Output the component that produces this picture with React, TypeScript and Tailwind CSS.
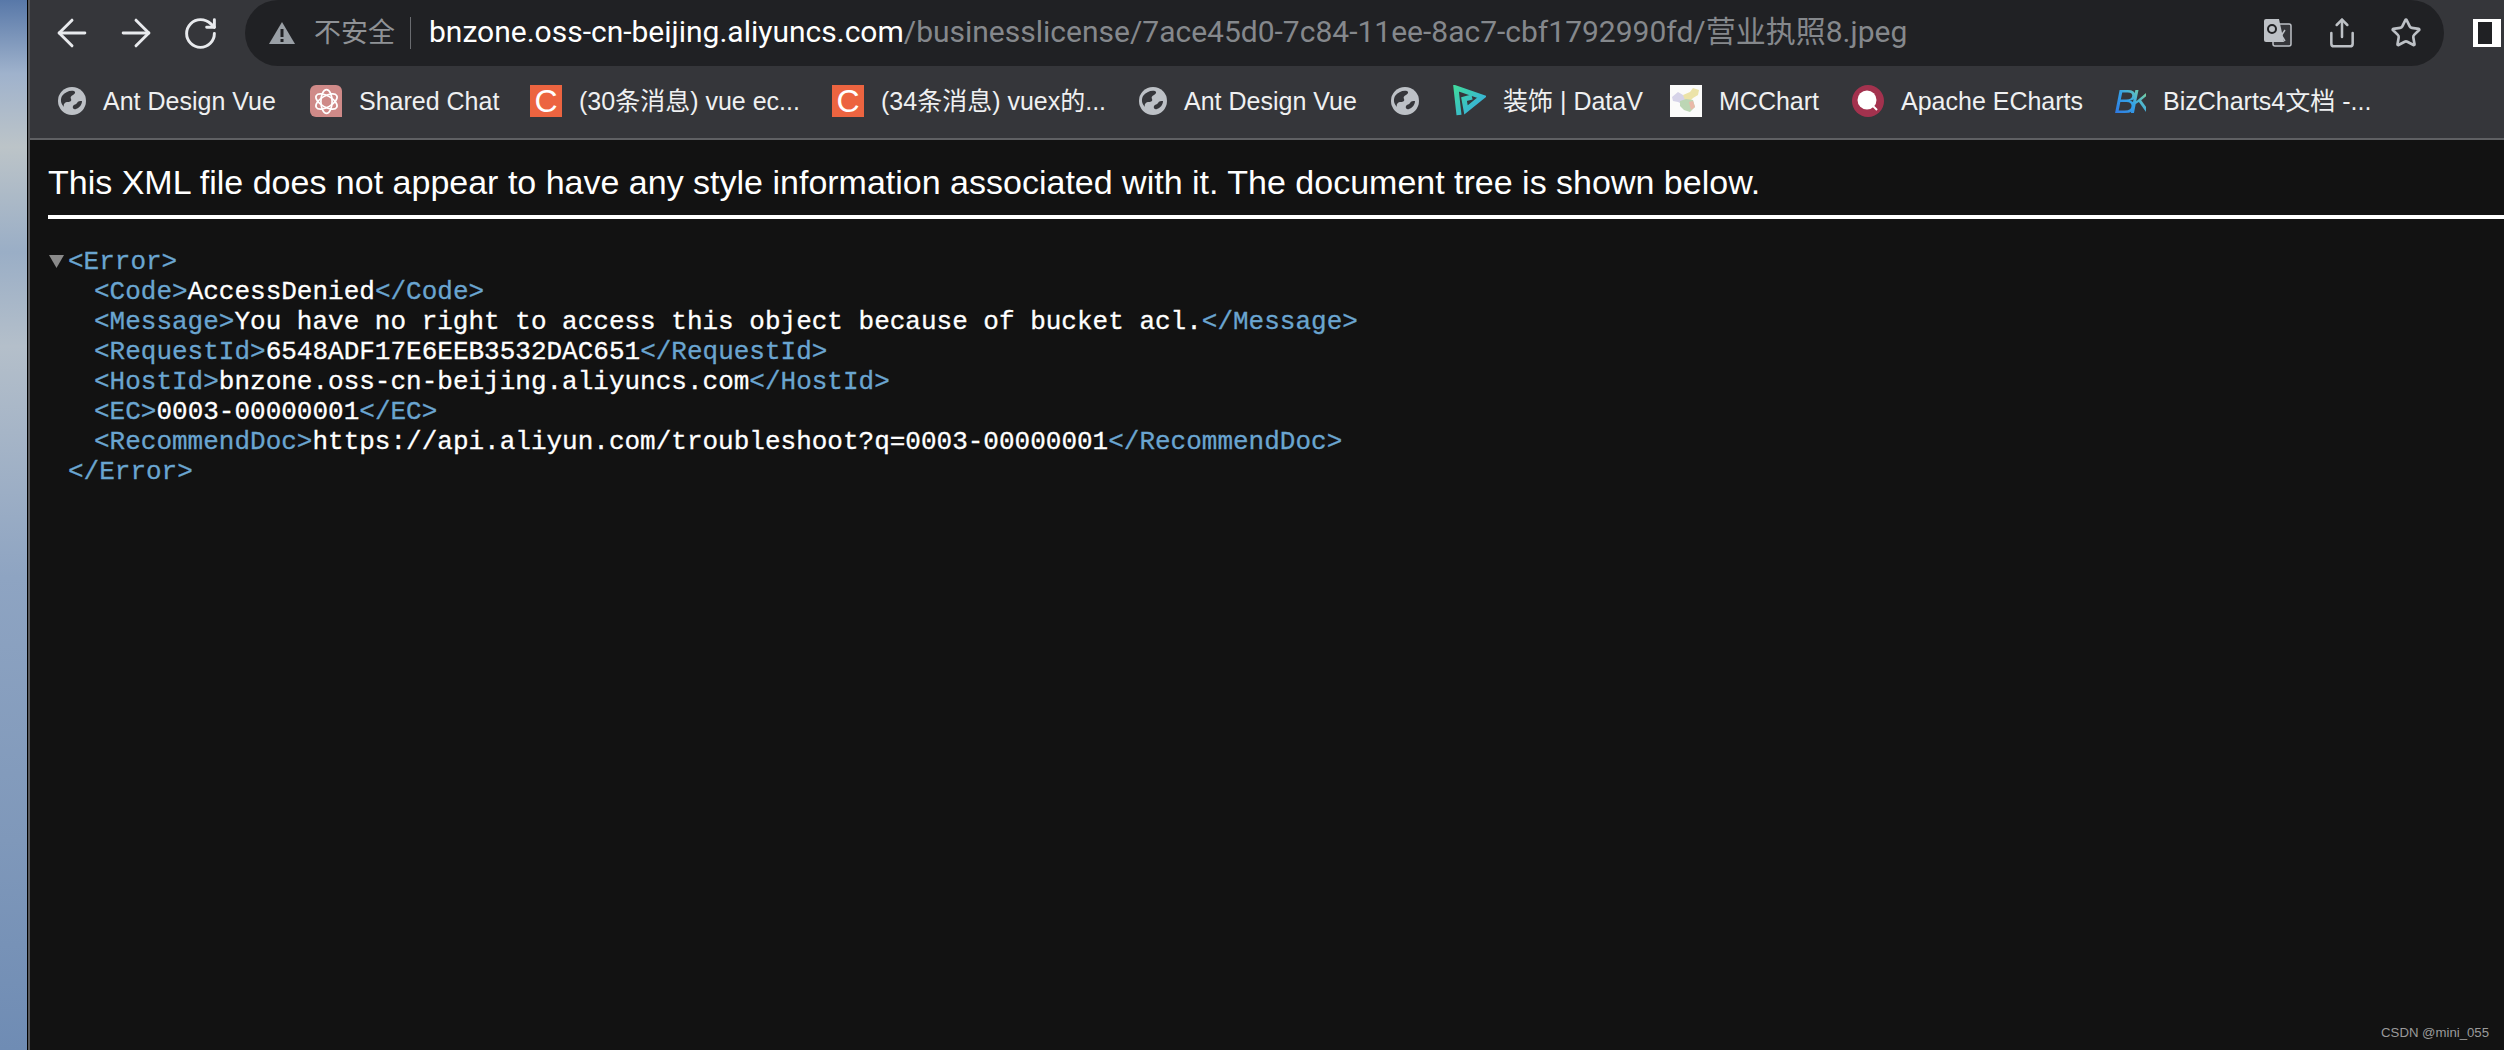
import React from "react";
import { ArrowLeft, ArrowRight, RotateCw, Star, Share } from "lucide-react";

const Globe = () => (
  <svg width="28" height="28" viewBox="0 0 28 28" className="shrink-0">
    <circle cx="14" cy="14" r="14" fill="#bdc1c6" />
    <path
      d="M4 9c3-4 8-6 12-5 2 1 1 3-1 4-2 1-3 2-2 4 1 2-1 3-3 3-3 0-5 2-4 5-3-3-4-7-2-11z"
      fill="#35363a"
    />
    <path d="M24 14c-2 0-4 0-5 2-1 2-3 1-4 3-1 2 1 4 3 3 3-1 6-4 6-8z" fill="#35363a" />
  </svg>
);

const GptIcon = () => (
  <div className="w-8 h-8 rounded-md rounded-br-none bg-[#cf8a88] flex items-center justify-center shrink-0">
    <svg width="27" height="27" viewBox="0 0 24 24" fill="none" stroke="#ffffff" strokeWidth="1.5">
      <ellipse cx="12" cy="12" rx="5" ry="10.5" />
      <ellipse cx="12" cy="12" rx="5" ry="10.5" transform="rotate(60 12 12)" />
      <ellipse cx="12" cy="12" rx="5" ry="10.5" transform="rotate(120 12 12)" />
    </svg>
  </div>
);

const CsdnIcon = () => (
  <div className="w-8 h-8 bg-[#ec6440] flex items-center justify-center shrink-0 text-white text-[32px] leading-none font-['Liberation_Sans',sans-serif]">
    C
  </div>
);

const DataVIcon = () => (
  <svg width="33" height="32" viewBox="0 0 33 32" fill="none" className="shrink-0">
    <defs>
      <linearGradient id="dv" x1="0" y1="0" x2="1" y2="1">
        <stop offset="0" stopColor="#3fd8a0" />
        <stop offset="1" stopColor="#36a9e6" />
      </linearGradient>
    </defs>
    <path
      d="M6 30L3 3L29 12L13 25L11 14L19 12"
      stroke="url(#dv)"
      strokeWidth="5"
      strokeLinejoin="miter"
    />
  </svg>
);

const MapIcon = () => (
  <div className="w-8 h-8 bg-[#fbfbfa] flex items-center justify-center shrink-0">
    <svg width="30" height="28" viewBox="0 0 30 28">
      <path d="M1 10l6-5 5 3 3 4-2 6-6-3-5-1z" fill="#d6d3e8" />
      <path d="M12 8l7-3 3-4 6 2-1 5-5 3-3 3-5-1z" fill="#ece3a8" />
      <path d="M9 14l6-2 7 1 2 7-5 5-6-2-4-4z" fill="#bcd6b4" />
      <path d="M18 15l4-1 2 6-4 3z" fill="#eab9a8" />
    </svg>
  </div>
);

const EchartsIcon = () => (
  <svg width="32" height="32" viewBox="0 0 32 32" className="shrink-0">
    <circle cx="16" cy="16" r="16" fill="#a3324e" />
    <circle cx="15" cy="15" r="9.5" fill="#ffffff" />
    <path d="M21 21l4 4" stroke="#ffffff" strokeWidth="2" />
  </svg>
);

const BkIcon = () => (
  <div className="w-8 h-8 flex items-center shrink-0 italic text-[34px] leading-none tracking-[-7px] font-['Liberation_Sans',sans-serif] text-transparent bg-clip-text bg-gradient-to-tr from-[#2f6fe0] via-[#35a3e6] to-[#8fdc7a]">
    BK
  </div>
);

const TranslateIcon = () => (
  <svg width="28" height="28" viewBox="0 0 28 28" className="shrink-0">
    <rect x="9" y="5" width="18" height="22" rx="2" fill="#35363a" stroke="#bdc1c6" strokeWidth="1.5" />
    <path d="M14 11l7 11M21 11l-6 9" stroke="#bdc1c6" strokeWidth="1.5" fill="none" />
    <path d="M2 0h13l5 23H2a2 2 0 0 1-2-2V2a2 2 0 0 1 2-2z" fill="#bdc1c6" />
    <circle cx="8" cy="10" r="4" fill="none" stroke="#202124" strokeWidth="2" />
  </svg>
);

const bookmarks = [
  { icon: <Globe />, label: "Ant Design Vue", cls: "w-[252px]" },
  { icon: <GptIcon />, label: "Shared Chat", cls: "w-[220px]" },
  { icon: <CsdnIcon />, label: "(30条消息) vue ec...", cls: "w-[302px]" },
  { icon: <CsdnIcon />, label: "(34条消息) vuex的...", cls: "w-[307px]" },
  { icon: <Globe />, label: "Ant Design Vue", cls: "w-[252px]" },
  { icon: <Globe />, label: "", cls: "w-[62px]" },
  { icon: <DataVIcon />, label: "装饰 | DataV", cls: "w-[217px]" },
  { icon: <MapIcon />, label: "MCChart", cls: "w-[182px]" },
  { icon: <EchartsIcon />, label: "Apache ECharts", cls: "w-[262px]" },
  { icon: <BkIcon />, label: "BizCharts4文档 -...", cls: "w-[280px]" },
];

const T = ({ children }: { children: React.ReactNode }) => (
  <span className="text-[#6aa5d0]">{children}</span>
);

const Row = ({ name, value }: { name: string; value: string }) => (
  <div className="pl-[64px] h-[30px]">
    <T>&lt;{name}&gt;</T>
    {value}
    <T>&lt;/{name}&gt;</T>
  </div>
);

export default function App() {
  return (
    <div className="flex w-[2504px] h-[1050px] overflow-hidden bg-[#121212] font-['Liberation_Sans','Noto_Sans_CJK_SC',sans-serif]">
      {/* wallpaper showing at the left edge */}
      <div className="w-[27px] shrink-0 bg-[linear-gradient(180deg,#5878a8_0%,#9fb2cc_7%,#bcc4c8_14%,#9aaec6_24%,#b4bfca_33%,#8ea4c2_55%,#7f98ba_80%,#6f8cb4_100%)] border-r border-black box-content" />
      <div className="w-[2px] shrink-0 bg-[#58595c]" />

      <div className="flex-1 min-w-0 flex flex-col">
        {/* toolbar */}
        <div className="h-[66px] bg-[#35363a] flex items-center shrink-0">
          <div className="w-[215px] shrink-0 pl-[20px] flex items-center text-[#e8eaed]">
            <ArrowLeft size={44} strokeWidth={1.6} />
            <ArrowRight size={44} strokeWidth={1.6} className="ml-[20px]" />
            <RotateCw size={37} strokeWidth={1.9} className="ml-[24px]" />
          </div>
          <div className="w-[2199px] h-[66px] rounded-full bg-[#202124] shrink-0 flex items-center pl-[24px] pr-[22px]">
            <svg width="26" height="22" viewBox="0 0 26 22" className="shrink-0">
              <path d="M13 0l13 22H0z" fill="#9aa0a6" />
              <rect x="11.5" y="7" width="3" height="8" fill="#202124" />
              <rect x="11.5" y="17" width="3" height="3" fill="#202124" />
            </svg>
            <span className="ml-[19px] text-[27px] text-[#8f9296] leading-none">不安全</span>
            <div className="ml-[15px] w-px h-[32px] bg-[#6a6c70]" />
            <div className="ml-[18px] pb-[2px] text-[30px] leading-none whitespace-nowrap text-white font-['Roboto','Noto_Sans_CJK_SC',sans-serif]">
              bnzone.oss-cn-beijing.aliyuncs.com
              <span className="text-[#85888c]">/businesslicense/7ace45d0-7c84-11ee-8ac7-cbf1792990fd/营业执照8.jpeg</span>
            </div>
            <div className="ml-auto flex items-center text-[#bdc1c6]">
              <TranslateIcon />
              <Share size={32} strokeWidth={1.9} className="ml-[34px]" />
              <Star size={32} strokeWidth={2} className="ml-[32px]" />
            </div>
          </div>
          <div className="ml-[29px] w-[28px] h-[28px] bg-white shrink-0 pl-[5px] pr-[9px] py-[3px]">
            <div className="w-full h-full bg-[#202124]" />
          </div>
        </div>

        {/* bookmarks bar */}
        <div className="h-[74px] bg-[#35363a] border-b-2 border-[#5f6063] flex items-center pl-[28px] pb-[2px] shrink-0">
          {bookmarks.map((b, i) => (
            <div key={i} className={"flex items-center gap-[17px] shrink-0 " + b.cls}>
              {b.icon}
              {b.label && (
                <span className="text-[25px] leading-none whitespace-nowrap text-[#eff0f1]">{b.label}</span>
              )}
            </div>
          ))}
        </div>

        {/* xml viewer */}
        <div className="flex-1 relative text-white">
          <div className="ml-[18px] pt-[23px] h-[79px] border-b-4 border-white text-[34px] leading-[38px] whitespace-nowrap">
            This XML file does not appear to have any style information associated with it. The document tree is shown below.
          </div>
          <div className="pt-[28px] text-[26px] leading-[30px] whitespace-pre font-['Liberation_Mono',monospace] [-webkit-text-stroke:0.3px]">
            <div className="pl-[19px] h-[30px] flex">
              <svg width="15" height="13" viewBox="0 0 15 13" className="mt-[8px] mr-[4px] shrink-0">
                <path d="M0 0h15L7.5 13z" fill="#8a8a8a" />
              </svg>
              <T>&lt;Error&gt;</T>
            </div>
            <Row name="Code" value="AccessDenied" />
            <Row name="Message" value="You have no right to access this object because of bucket acl." />
            <Row name="RequestId" value="6548ADF17E6EEB3532DAC651" />
            <Row name="HostId" value="bnzone.oss-cn-beijing.aliyuncs.com" />
            <Row name="EC" value="0003-00000001" />
            <Row name="RecommendDoc" value="https://api.aliyun.com/troubleshoot?q=0003-00000001" />
            <div className="pl-[38px] h-[30px]">
              <T>&lt;/Error&gt;</T>
            </div>
          </div>
          <div className="absolute right-[15px] bottom-[11px] text-[13.2px] leading-none text-[#9a9a9a]">
            CSDN @mini_055
          </div>
        </div>
      </div>
    </div>
  );
}
